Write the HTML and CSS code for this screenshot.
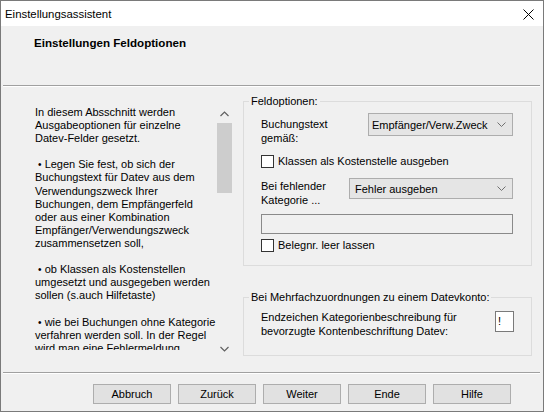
FILE: index.html
```html
<!DOCTYPE html>
<html lang="de">
<head>
<meta charset="utf-8">
<title>Einstellungsassistent</title>
<link rel="stylesheet" href="styles.css">
</head>
<body>
<div class="window">
  <div class="titlebar">
    <span class="title">Einstellungsassistent</span>
    <svg class="close" width="11" height="11" viewBox="0 0 11 11"><path d="M0.5 0.5L10.5 10.5M10.5 0.5L0.5 10.5" stroke="#000" stroke-width="1" fill="none"/></svg>
  </div>
  <div class="header"><span class="header-title">Einstellungen Feldoptionen</span></div>
  <div class="separator"></div>
  <div class="content">
    <div class="info">
      <div class="info-text">In diesem Absschnitt werden<br>Ausgabeoptionen für einzelne<br>Datev-Felder gesetzt.<br><br>&nbsp;<span class="bullet">•</span> Legen Sie fest, ob sich der<br>Buchungstext für Datev aus dem<br>Verwendungszweck Ihrer<br>Buchungen, dem Empfängerfeld<br>oder aus einer Kombination<br>Empfänger/Verwendungszweck<br>zusammensetzen soll,<br><br>&nbsp;<span class="bullet">•</span> ob Klassen als Kostenstellen<br>umgesetzt und ausgegeben werden<br>sollen (s.auch Hilfetaste)<br><br>&nbsp;<span class="bullet">•</span> wie bei Buchungen ohne Kategorie<br>verfahren werden soll. In der Regel<br>wird man eine Fehlermeldung</div>
      <div class="scrollbar">
        <div class="sb-btn"><svg width="9" height="6" viewBox="0 0 9 6"><path d="M0.5 5L4.5 1L8.5 5" stroke="#606060" stroke-width="1.2" fill="none"/></svg></div>
        <div class="sb-track"><div class="sb-thumb"></div></div>
        <div class="sb-btn"><svg width="9" height="6" viewBox="0 0 9 6"><path d="M0.5 1L4.5 5L8.5 1" stroke="#606060" stroke-width="1.2" fill="none"/></svg></div>
      </div>
    </div>
    <div class="options">
      <fieldset class="group group-fields">
        <legend>Feldoptionen:</legend>
        <div class="inner">
          <div class="row row-text">
            <div class="label label-text">Buchungstext<br>gemäß:</div>
            <div class="combo combo-text"><span>Empfänger/Verw.Zweck</span><svg width="9" height="5" viewBox="0 0 9 5"><path d="M0.5 0.5L4.5 4.5L8.5 0.5" stroke="#707070" stroke-width="1" fill="none"/></svg></div>
          </div>
          <div class="check check-klassen"><span class="box"></span><span>Klassen als Kostenstelle ausgeben</span></div>
          <div class="row row-kat">
            <div class="label label-kat">Bei fehlender<br>Kategorie ...</div>
            <div class="combo combo-kat"><span>Fehler ausgeben</span><svg width="9" height="5" viewBox="0 0 9 5"><path d="M0.5 0.5L4.5 4.5L8.5 0.5" stroke="#707070" stroke-width="1" fill="none"/></svg></div>
          </div>
          <div class="edit"></div>
          <div class="check check-beleg"><span class="box"></span><span>Belegnr. leer lassen</span></div>
        </div>
      </fieldset>
      <fieldset class="group group-multi">
        <legend>Bei Mehrfachzuordnungen zu einem Datevkonto:</legend>
        <div class="inner">
          <div class="row row-end">
            <div class="label label-end">Endzeichen Kategorienbeschreibung für<br>bevorzugte Kontenbeschriftung Datev:</div>
            <div class="small-edit">!</div>
          </div>
        </div>
      </fieldset>
    </div>
  </div>
  <div class="separator"></div>
  <div class="buttons">
    <div class="btn">Abbruch</div>
    <div class="btn">Zurück</div>
    <div class="btn">Weiter</div>
    <div class="btn">Ende</div>
    <div class="btn">Hilfe</div>
  </div>
</div>
</body>
</html>
```

FILE: styles.css
```css
* { box-sizing: border-box; }
html, body { margin: 0; padding: 0; }
body {
  font-family: "Liberation Sans", Arial, sans-serif;
  font-size: 11px;
  color: #000;
  background: #f0f0f0;
}
.window {
  width: 544px;
  height: 412px;
  border: 1px solid #7a7a7a;
  background: #f0f0f0;
  display: flex;
  flex-direction: column;
  overflow: hidden;
}
.titlebar {
  height: 25px;
  flex: none;
  background: #fff;
  display: flex;
  align-items: center;
  justify-content: space-between;
  padding-left: 4px;
  padding-right: 9px;
}
.title { font-size: 11.4px; line-height: 14px; }
.close { display: block; margin-top: 1px; }
.header {
  height: 59px;
  flex: none;
  padding-left: 33px;
  padding-top: 10px;
}
.header-title { font-weight: bold; font-size: 11.6px; line-height: 14px; }
.separator {
  height: 2px;
  flex: none;
  margin: 0 3px 0 2px;
  border-top: 1px solid #a0a0a0;
  border-bottom: 1px solid #fff;
}
.content {
  height: 285px;
  flex: none;
  display: flex;
  padding-left: 33px;
}
.info {
  width: 199px;
  height: 252px;
  margin-top: 18px;
  display: flex;
}
.info-text {
  width: 182px;
  height: 245px;
  overflow: hidden;
  padding-left: 1px;
  padding-top: 1px;
  font-size: 11px;
  line-height: 13.1px;
  white-space: nowrap;
}
.bullet { font-size: 10px; }
.scrollbar {
  width: 17px;
  height: 252px;
  display: flex;
  flex-direction: column;
  background: #f0f0f0;
}
.sb-btn {
  height: 17px;
  display: flex;
  align-items: center;
  justify-content: center;
}
.sb-btn svg { display: block; }
.sb-track { flex: 1; padding: 1px 1px 0 1px; }
.sb-thumb { height: 70px; background: #cdcdcd; }
.options {
  width: 289px;
  margin-left: 10px;
  padding-top: 7px;
}
.group {
  margin: 0;
  padding: 0;
  border: 1px solid #dcdcdc;
  min-width: 0;
}
.group legend {
  padding: 0 2px;
  margin-left: 5px;
  line-height: 14px;
  font-size: 11px;
}
.group .inner { padding-left: 17px; }
.group-fields .inner { padding-bottom: 13px; }
.row { display: flex; align-items: flex-start; }
.label { line-height: 14px; }
.row-text { margin-top: 5px; }
.label-text { width: 107px; padding-top: 4px; }
.combo {
  background: #e5e5e5;
  border: 1px solid #adadad;
  display: flex;
  align-items: center;
  justify-content: space-between;
  padding: 0 6px 0 3px;
}
.combo svg { display: block; }
.combo-text { width: 145px; height: 23px; }
.label-kat { width: 88px; padding-top: 1px; }
.combo-kat { width: 164px; height: 21px; padding-left: 5px; }
.row-kat { margin-top: 10px; }
.check { display: flex; align-items: center; height: 13px; line-height: 13px; }
.check .box {
  width: 13px;
  height: 13px;
  border: 1px solid #333;
  background: #fff;
  margin-right: 4px;
  flex: none;
}
.check-klassen { margin-top: 10px; }
.edit {
  margin-top: 7px;
  width: 252px;
  height: 20px;
  border: 1px solid #8a8a8a;
  background: #f0f0f0;
}
.check-beleg { margin-top: 5px; }
.group-multi { margin-top: 24px; }
.group-multi .inner { padding-bottom: 17px; }
.row-end { margin-top: 7px; justify-content: space-between; padding-right: 17px; }
.label-end { line-height: 13.5px; }
.small-edit {
  width: 19px;
  height: 21px;
  background: #fff;
  border: 1px solid #7a7a7a;
  padding-left: 2px;
  line-height: 18px;
}
.buttons {
  flex: none;
  display: flex;
  gap: 7px;
  padding-top: 10px;
  padding-left: 92px;
}
.btn {
  width: 78px;
  height: 20px;
  background: #e1e1e1;
  border: 1px solid #adadad;
  text-align: center;
  line-height: 18px;
}
```
